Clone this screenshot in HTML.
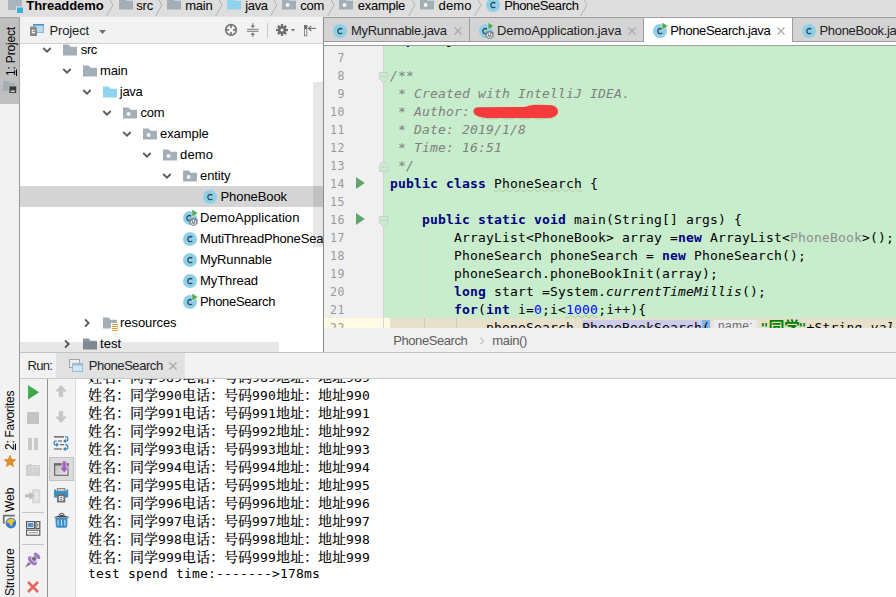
<!DOCTYPE html>
<html lang="zh">
<head>
<meta charset="utf-8">
<title>Threaddemo - PhoneSearch.java</title>
<style>
*{box-sizing:border-box;margin:0;padding:0}
html,body{width:896px;height:597px;overflow:hidden;background:#f2f2f2}
body{position:relative;font-family:"Liberation Sans","Noto Sans CJK SC",sans-serif;font-size:13px;color:#000}
.abs{position:absolute}
svg{position:absolute;overflow:visible}
/* nav bar */
#nav{left:0;top:0;width:896px;height:17px;background:#dedede;border-bottom:1px solid #e3e3e3;overflow:hidden}
#nav .t{position:absolute;top:-3.5px;height:17px;line-height:17px;font-size:13px;white-space:nowrap;color:#000}
/* left stripe */
#stripe{left:0;top:17px;width:20px;height:580px;background:#f2f2f2;border-right:1px solid #979797}
.vt{position:absolute;white-space:nowrap;font-size:12px;transform-origin:0 0;transform:rotate(-90deg);line-height:14px;height:14px}
/* project */
#phead{left:20px;top:18px;width:303px;height:26px;background:#f2f2f2;border-bottom:1px solid #d1d1d1}
#tree{left:20px;top:44px;width:303px;height:308px;background:#fff;overflow:hidden}
.row{position:absolute;left:0;width:304px;height:21px}
.row .t{position:absolute;top:0;line-height:21px;font-size:13px;white-space:nowrap}
/* editor */
#tabs{left:323px;top:17px;width:573px;height:29px;background:#fff;overflow:hidden;border-left:1px solid #8c8c8c;border-bottom:1px solid #9c9c9c}
.tab{position:absolute;top:0;height:25px;background:#d4d4d4;box-shadow:inset 0 0 0 1px #9c9c9c}
.tab .t{position:absolute;top:1px;line-height:25px;font-size:13px;white-space:nowrap;color:#222}
#ed{left:323px;top:46px;width:573px;height:282px;border-left:1px solid #8c8c8c;background:#c7edcc;overflow:hidden}
#gut{left:0;top:0;width:60px;height:284px;background:#f0f0f0;border-right:1px solid #d4d4d4}
.ln{position:absolute;left:0;width:21.200px;text-align:right;font:11.500px/18px "DejaVu Sans Mono","Liberation Mono",monospace;letter-spacing:.7px;color:#999;height:18px;margin-top:.2px}
.cl{position:absolute;left:66px;white-space:pre;font:13px/18px "DejaVu Sans Mono","Liberation Mono",monospace;letter-spacing:.174px;height:18px;color:#000}
.k{color:#000080;font-weight:bold}
.c{color:#808080;font-style:italic}
.n{color:#0000ff}
.g{color:#8c8c8c}
.i{font-style:italic}
.s{color:#008000;font-weight:bold}
.w{text-decoration:underline wavy rgba(150,150,120,.4);text-decoration-thickness:.5px;text-underline-offset:.3px;text-decoration-skip-ink:none}
#crumb{left:323px;top:328px;width:573px;height:24px;background:#f0f0f0;border-left:1px solid #8c8c8c}
#crumb .t{position:absolute;top:0;line-height:25px;font-size:13px;color:#5c5c5c;white-space:nowrap}
/* run */
#rhead{left:20px;top:352px;width:876px;height:27px;background:#f2f2f2;border-bottom:1px solid #c9c9c9;border-top:1px solid #c4c4c4}
#rhead .t{position:absolute;top:0;line-height:25px;font-size:13px;white-space:nowrap;color:#222}
#rtb{left:20px;top:379px;width:56px;height:218px;background:#f2f2f2}
#con{left:75px;top:379px;width:821px;height:218px;background:#fff;overflow:hidden;border-left:1px solid #dcdcdc}
.ol{position:absolute;left:12px;white-space:pre;font:13px/18px "DejaVu Sans Mono","Liberation Mono",monospace;letter-spacing:.174px;height:18px;color:#000}
.z{position:relative;top:-.5px;font:500 14px/18px "Noto Serif CJK SC","Noto Sans CJK SC",serif;letter-spacing:0}
</style>
</head>
<body>
<svg width="0" height="0" style="left:-10px;top:-10px">
<defs>
<symbol id="fold" viewBox="0 0 16 16"><path d="M1 2.5h5.6l2 2.2H15V13.5H1z" fill="#a3afb7"/></symbol>
<symbol id="foldb" viewBox="0 0 16 16"><path d="M1 2.5h5.6l2 2.2H15V13.5H1z" fill="#8fd3ec"/></symbol>
<symbol id="foldd" viewBox="0 0 16 16"><path d="M1 2.5h5.6l2 2.2H15V13.5H1z" fill="#8b979f"/></symbol>
<symbol id="pkg" viewBox="0 0 16 16"><path d="M1 2.5h5.6l2 2.2H15V13.5H1z" fill="#a3afb7"/><circle cx="6.6" cy="9" r="2" fill="#f4f6f7"/></symbol>
<symbol id="res" viewBox="0 0 16 16"><path d="M1 2.5h5.6l2 2.2H15V13.5H1z" fill="#a3afb7"/><rect x="9" y="8" width="7" height="8" fill="#fff"/><path d="M10 9.5h6M10 11.5h6M10 13.5h6M10 15.5h6" stroke="#e0a030" stroke-width="1"/></symbol>
<symbol id="cls" viewBox="0 0 16 16"><circle cx="8" cy="8" r="7" fill="#8fd0e8"/><path d="M10.3 9.9a2.6 2.6 0 1 1 0-3.6" fill="none" stroke="#2b4a5a" stroke-width="1.3"/></symbol>
<symbol id="clsr" viewBox="0 0 16 16"><circle cx="8" cy="8" r="7" fill="#8fd0e8"/><path d="M10.3 9.9a2.6 2.6 0 1 1 0-3.6" fill="none" stroke="#2b4a5a" stroke-width="1.3"/><path d="M10 -.8v7.800l6-3.900z" fill="#4fab4f" stroke="#fff" stroke-width=".5"/></symbol>
<symbol id="clss" viewBox="0 0 16 16"><circle cx="8" cy="8" r="7" fill="#8fd0e8"/><path d="M9.3 9.9a2.6 2.6 0 1 1 0-3.6" fill="none" stroke="#2b4a5a" stroke-width="1.3"/><path d="M10 -.8v7.800l6-3.900z" fill="#4fab4f" stroke="#fff" stroke-width=".5"/><path d="M11.500 7.400l4.100 1.700v4.600l-4.100 2.800-4.100-2.800V9.100z" fill="#7e8a92"/><path d="M10.100 10.600a2.200 2.200 0 1 0 2.800 0M11.500 9.400v2.800" fill="none" stroke="#fff" stroke-width=".9"/></symbol>
<symbol id="dn" viewBox="0 0 16 16"><path d="M4.300 6l3.700 3.700 3.700-3.700" fill="none" stroke="#5a5a5a" stroke-width="1.800"/></symbol>
<symbol id="rt" viewBox="0 0 16 16"><path d="M6 4.300l3.700 3.700-3.700 3.700" fill="none" stroke="#5a5a5a" stroke-width="1.800"/></symbol>
<symbol id="cx" viewBox="0 0 16 16"><path d="M4.5 4.5l7 7M11.5 4.5l-7 7" stroke="#a8a8a8" stroke-width="1.2"/></symbol>
<symbol id="run" viewBox="0 0 16 16"><path d="M3 1.5v13l11-6.5z" fill="#59a869"/></symbol>
</defs></svg>
<div id="nav" class="abs">
<svg width="16" height="16" style="left:7px;top:-3.500px" viewBox="0 0 16 16"><path d="M1 0h8v1.500h6V9.500H9v3.500H1z" fill="#a9b4bc"/><rect x="9" y="9.500" width="7.500" height="7" fill="#dedede"/><rect x="10" y="10.500" width="6" height="5.500" fill="#35b0dc"/></svg>
<span class="t" style="left:26.300px;font-weight:bold;letter-spacing:-0.08px">Threaddemo</span>
<svg class="chev" width="10" height="24" style="left:105px;top:-7px" viewBox="0 0 10 24"><path d="M1 0l7 12-7 12" fill="none" stroke="#b2b2b2" stroke-width="1"/></svg>
<svg width="16" height="16" style="left:118px;top:-4px"><use href="#fold"/></svg>
<span class="t" style="left:136.2px;letter-spacing:-0.13px">src</span>
<svg class="chev" width="10" height="24" style="left:154px;top:-7px" viewBox="0 0 10 24"><path d="M1 0l7 12-7 12" fill="none" stroke="#b2b2b2" stroke-width="1"/></svg>
<svg width="16" height="16" style="left:166px;top:-4px"><use href="#fold"/></svg>
<span class="t" style="left:185.2px;letter-spacing:-0.22px">main</span>
<svg class="chev" width="10" height="24" style="left:214px;top:-7px" viewBox="0 0 10 24"><path d="M1 0l7 12-7 12" fill="none" stroke="#b2b2b2" stroke-width="1"/></svg>
<svg width="16" height="16" style="left:226px;top:-4px"><use href="#foldb"/></svg>
<span class="t" style="left:245.2px;letter-spacing:-0.34px">java</span>
<svg class="chev" width="10" height="24" style="left:269px;top:-7px" viewBox="0 0 10 24"><path d="M1 0l7 12-7 12" fill="none" stroke="#b2b2b2" stroke-width="1"/></svg>
<svg width="16" height="16" style="left:281px;top:-4px"><use href="#pkg"/></svg>
<span class="t" style="left:300.2px;letter-spacing:-0.27px">com</span>
<svg class="chev" width="10" height="24" style="left:326px;top:-7px" viewBox="0 0 10 24"><path d="M1 0l7 12-7 12" fill="none" stroke="#b2b2b2" stroke-width="1"/></svg>
<svg width="16" height="16" style="left:338px;top:-4px"><use href="#pkg"/></svg>
<span class="t" style="left:357.8px;letter-spacing:-0.27px">example</span>
<svg class="chev" width="10" height="24" style="left:407px;top:-7px" viewBox="0 0 10 24"><path d="M1 0l7 12-7 12" fill="none" stroke="#b2b2b2" stroke-width="1"/></svg>
<svg width="16" height="16" style="left:419px;top:-4px"><use href="#pkg"/></svg>
<span class="t" style="left:438.5px;letter-spacing:0.18px">demo</span>
<svg class="chev" width="10" height="24" style="left:473px;top:-7px" viewBox="0 0 10 24"><path d="M1 0l7 12-7 12" fill="none" stroke="#b2b2b2" stroke-width="1"/></svg>
<svg width="16" height="16" style="left:485px;top:-3px"><use href="#cls"/></svg>
<span class="t" style="left:504.2px;letter-spacing:-0.41px">PhoneSearch</span>
<svg class="chev" width="10" height="24" style="left:579px;top:-7px" viewBox="0 0 10 24"><path d="M1 0l7 12-7 12" fill="none" stroke="#b2b2b2" stroke-width="1"/></svg>
</div>
<div id="stripe" class="abs">
<div class="abs" style="left:0;top:0;width:20px;height:87px;background:#bfbfbf;border-top:1px solid #a2a2a2;border-right:1px solid #a2a2a2"></div>
<span class="vt" style="left:3.500px;top:59px;letter-spacing:-.17px"><u>1</u>: Project</span>
<svg width="14" height="14" style="left:3px;top:63px" viewBox="0 0 14 14"><path d="M0 1h5l1.500 2H12v8H0z" fill="#a3afb7"/><rect x="5.700" y="5.700" width="8" height="7.500" fill="#bcbcbc"/><rect x="6.400" y="6.400" width="6.800" height="6.500" fill="#3a3a3a"/><rect x="7.800" y="10.500" width="4" height="1.300" fill="#f0f0f0"/></svg>
<span class="vt" style="left:3px;top:432.500px;letter-spacing:-.29px"><u>2</u>: Favorites</span>
<svg width="14" height="14" style="left:2.500px;top:436.500px" viewBox="0 0 14 14"><path d="M7 .5l2 4.500 4.700.400-3.600 3.100 1.100 4.700L7 10.700 2.800 13.200l1.100-4.700L.3 5.400 5 5z" fill="#dd8f2f"/></svg>
<span class="vt" style="left:3px;top:495px">Web</span>
<svg width="16" height="16" style="left:2px;top:497px" viewBox="0 0 16 16"><path d="M.9 .8h12v1.700H2.600v7.200H.9z" fill="#707070"/><circle cx="8.900" cy="9.100" r="5.300" fill="#2f80d2"/><path d="M5 7.200c.8-1.800 2.600-2.700 4.200-2.500 1.500.2 2.800.9 3.300 2.100.3.900-.4 1.200-1.100 1.300-.8.100-1 .8-.8 1.600.2.900-.3 1.900-1.200 2.200-.9.300-1.500-.5-1.600-1.400-.1-.8-.6-1.200-1.400-1.400C5.500 8.900 4.700 8.200 5 7.200z" fill="#f3c331"/></svg>
<span class="vt" style="left:3px;top:578.500px;letter-spacing:-.13px">Structure</span>
</div>
<div id="phead" class="abs">
<svg width="16" height="16" style="left:9px;top:4px" viewBox="0 0 16 16"><rect x="4.500" y="2.500" width="10" height="8" fill="#b9dcf2" stroke="#7db9e0" stroke-width="1"/><rect x="4" y="2" width="11" height="1.600" fill="#4d93c4"/><path d="M1 4.500h5.500L8 6v8H1z" fill="#8a8a8a"/><path d="M3.300 8.300h2.600M3.300 10.600h2.600" stroke="#f4f4f4" stroke-width="1.100"/><path d="M3.300 7.800v3.300" stroke="#f4f4f4" stroke-width=".9"/></svg>
<span class="abs" style="left:29.500px;top:0;line-height:26px;font-size:13px;color:#1a1a1a;letter-spacing:-.14px">Project</span>
<svg width="7" height="4" style="left:79px;top:11.500px" viewBox="0 0 7 4"><path d="M0 0h7L3.500 4z" fill="#6e6e6e"/></svg>
<svg width="14" height="14" style="left:204px;top:5px" viewBox="0 0 14 14"><circle cx="7" cy="6.900" r="5.300" fill="none" stroke="#787878" stroke-width="1.700"/><path d="M7 1.600v3.300M7 12.200V8.900M1.700 6.900H5M12.300 6.900H9" stroke="#787878" stroke-width="1.700"/></svg>
<svg width="12" height="14" style="left:226.500px;top:5px" viewBox="0 0 12 14"><path d="M0 6.300h11.500M0 8.300h11.500" stroke="#787878" stroke-width="1"/><path d="M5.750 0v4M5.750 14v-4" stroke="#787878" stroke-width="1"/><path d="M3.500 2.500h4.500L5.750 5.300zM3.500 11.900h4.500L5.750 9.300z" fill="#787878"/></svg>
<div class="abs" style="left:247px;top:5px;width:1px;height:15px;background:#c8c8c8"></div>
<svg width="12" height="12" style="left:256px;top:5.900px" viewBox="0 0 12 12"><g fill="#6e6e6e"><circle cx="6" cy="6" r="4"/><rect x="4.900" y="0" width="2.200" height="12"/><rect x="0" y="4.900" width="12" height="2.200"/><rect x="4.900" y=".2" width="2.200" height="11.600" transform="rotate(45 6 6)"/><rect x="4.900" y=".2" width="2.200" height="11.600" transform="rotate(-45 6 6)"/></g><circle cx="6" cy="6" r="1.600" fill="#f2f2f2"/></svg>
<svg width="4" height="2.500" style="left:270.600px;top:11px" viewBox="0 0 4 2.500"><path d="M0 0h4L2 2.500z" fill="#6e6e6e"/></svg>
<svg width="13" height="12" style="left:284px;top:7px" viewBox="0 0 13 12"><rect x=".4" y=".4" width="2.400" height="10.400" fill="#f8f8f8" stroke="#6e6e6e" stroke-width=".8"/><rect x="0" y="0" width="3.200" height="4" fill="#6e6e6e"/><path d="M4.500 3.400H12" stroke="#6e6e6e" stroke-width="1.100"/><path d="M7.300 .8L4.600 3.400l2.700 2.600" fill="none" stroke="#6e6e6e" stroke-width="1.100"/></svg>
</div>
<div id="tree" class="abs">
<div class="row" style="top:-5px"><svg width="16" height="16" style="left:19px;top:3px"><use href="#dn"/></svg><svg width="16" height="16" style="left:42px;top:2.500px"><use href="#fold"/></svg><span class="t" style="left:60.8px;letter-spacing:-0.38px">src</span></div>
<div class="row" style="top:16px"><svg width="16" height="16" style="left:39px;top:3px"><use href="#dn"/></svg><svg width="16" height="16" style="left:62px;top:2.500px"><use href="#fold"/></svg><span class="t" style="left:80px;letter-spacing:-0.17px">main</span></div>
<div class="row" style="top:37px"><svg width="16" height="16" style="left:59px;top:3px"><use href="#dn"/></svg><svg width="16" height="16" style="left:82px;top:2.500px"><use href="#foldb"/></svg><span class="t" style="left:99.8px;letter-spacing:-0.29px">java</span></div>
<div class="row" style="top:58px"><svg width="16" height="16" style="left:79px;top:3px"><use href="#dn"/></svg><svg width="16" height="16" style="left:102px;top:2.500px"><use href="#pkg"/></svg><span class="t" style="left:120.5px;letter-spacing:-0.19px">com</span></div>
<div class="row" style="top:79px"><svg width="16" height="16" style="left:99px;top:3px"><use href="#dn"/></svg><svg width="16" height="16" style="left:122px;top:2.500px"><use href="#pkg"/></svg><span class="t" style="left:140px;letter-spacing:-0.06px">example</span></div>
<div class="row" style="top:100px"><svg width="16" height="16" style="left:119px;top:3px"><use href="#dn"/></svg><svg width="16" height="16" style="left:142px;top:2.500px"><use href="#pkg"/></svg><span class="t" style="left:160px;letter-spacing:0.18px">demo</span></div>
<div class="row" style="top:121px"><svg width="16" height="16" style="left:139px;top:3px"><use href="#dn"/></svg><svg width="16" height="16" style="left:162px;top:2.500px"><use href="#pkg"/></svg><span class="t" style="left:180px;letter-spacing:-0.1px">entity</span></div>
<div class="row" style="top:142px;background:#d5d5d5"><svg width="16" height="16" style="left:182px;top:3px"><use href="#cls"/></svg><span class="t" style="left:200.5px;letter-spacing:-0.08px">PhoneBook</span></div>
<div class="row" style="top:163px"><svg width="16" height="16" style="left:162px;top:3px"><use href="#clss"/></svg><span class="t" style="left:180px;letter-spacing:0.08px">DemoApplication</span></div>
<div class="row" style="top:184px"><svg width="16" height="16" style="left:162px;top:3px"><use href="#cls"/></svg><span class="t" style="left:180px;letter-spacing:-0.18px">MutiThreadPhoneSearch</span></div>
<div class="row" style="top:205px"><svg width="16" height="16" style="left:162px;top:3px"><use href="#cls"/></svg><span class="t" style="left:180px;letter-spacing:-0.12px">MyRunnable</span></div>
<div class="row" style="top:226px"><svg width="16" height="16" style="left:162px;top:3px"><use href="#cls"/></svg><span class="t" style="left:180px;letter-spacing:-0.07px">MyThread</span></div>
<div class="row" style="top:247px"><svg width="16" height="16" style="left:162px;top:3px"><use href="#clsr"/></svg><span class="t" style="left:180px;letter-spacing:-0.34px">PhoneSearch</span></div>
<div class="row" style="top:268px"><svg width="16" height="16" style="left:59px;top:3px"><use href="#rt"/></svg><svg width="16" height="16" style="left:82px;top:2.500px"><use href="#res"/></svg><span class="t" style="left:100px;letter-spacing:-0.06px">resources</span></div>
<div class="row" style="top:289px"><svg width="16" height="16" style="left:39px;top:3px"><use href="#rt"/></svg><svg width="16" height="16" style="left:62px;top:2.500px"><use href="#foldd"/></svg><span class="t" style="left:80px;letter-spacing:0.07px">test</span></div>
<div class="abs" style="left:293px;top:38px;width:10px;height:165px;background:rgba(0,0,0,.095)"></div>
<div class="abs" style="left:0;top:297.700px;width:258.500px;height:11px;background:rgba(0,0,0,.095)"></div>
</div>
<div id="tabs" class="abs">
<div class="tab" style="left:-1px;width:147px"><svg width="16" height="16" style="left:9px;top:6px"><use href="#cls"/></svg><span class="t" style="left:28px;letter-spacing:-0.32px">MyRunnable.java</span><svg width="16" height="16" style="left:126.5px;top:5.500px"><use href="#cx"/></svg></div>
<div class="tab" style="left:145px;width:175px"><svg width="16" height="16" style="left:8.5px;top:6px"><use href="#clss"/></svg><span class="t" style="left:28px;letter-spacing:-0.07px">DemoApplication.java</span><svg width="16" height="16" style="left:154.75px;top:5.500px"><use href="#cx"/></svg></div>
<div class="tab" style="left:320px;width:148px;background:#fff;height:28px;box-shadow:inset 0 1px 0 #9c9c9c"><svg width="16" height="16" style="left:7.5px;top:6px"><use href="#clsr"/></svg><span class="t" style="left:26.3px;color:#000;letter-spacing:-0.39px">PhoneSearch.java</span><svg width="16" height="16" style="left:129px;top:5.500px"><use href="#cx"/></svg></div>
<div class="tab" style="left:468px;width:113px"><svg width="16" height="16" style="left:9px;top:6px"><use href="#cls"/></svg><span class="t" style="left:27.5px;letter-spacing:-0.33px">PhoneBook.java</span></div>
</div>
<div id="ed" class="abs"><div class="abs" style="left:0;top:-2px;width:572px;height:284px">
<div class="abs" style="left:0;top:274px;width:572px;height:18px;background:#fffae3"></div>
<div class="abs" style="left:66px;top:274px;width:506px;height:18px;background:#e7e0ca"></div>
<div id="gut" class="abs"></div>
<div class="abs" style="left:0;top:274px;width:59px;height:18px;background:#fffae3"></div>
<div class="abs" style="left:100px;top:184px;width:1px;height:90px;background:#d9e6da"></div><div class="abs" style="left:100px;top:274px;width:1px;height:18px;background:#cfcab8"></div>
<div class="abs" style="left:132px;top:274px;width:1px;height:18px;background:#cfcab8"></div>
<span class="ln" style="top:-13px">6</span>
<span class="ln" style="top:5px">7</span>
<span class="ln" style="top:23px">8</span>
<span class="ln" style="top:41px">9</span>
<span class="ln" style="top:59px">10</span>
<span class="ln" style="top:77px">11</span>
<span class="ln" style="top:95px">12</span>
<span class="ln" style="top:113px">13</span>
<span class="ln" style="top:131px">14</span>
<span class="ln" style="top:149px">15</span>
<span class="ln" style="top:167px">16</span>
<span class="ln" style="top:185px">17</span>
<span class="ln" style="top:203px">18</span>
<span class="ln" style="top:221px">19</span>
<span class="ln" style="top:239px">20</span>
<span class="ln" style="top:257px">21</span>
<span class="ln" style="top:275px">22</span>
<span class="cl" style="top:-13px"><span class="k">import</span> java.util.Iterator;</span>
<span class="cl" style="top:23px"><span class="c">/**</span></span>
<span class="cl" style="top:41px"><span class="c"> * Created with IntelliJ IDEA.</span></span>
<span class="cl" style="top:59px"><span class="c"> * Author: </span></span>
<span class="cl" style="top:77px"><span class="c"> * Date: 2019/1/8</span></span>
<span class="cl" style="top:95px"><span class="c"> * Time: 16:51</span></span>
<span class="cl" style="top:113px"><span class="c"> */</span></span>
<span class="cl" style="top:131px"><span class="k">public class</span> <span class="w">PhoneSearch</span> {</span>
<span class="cl" style="top:167px">    <span class="k">public static void</span> main(String[] args) {</span>
<span class="cl" style="top:185px">        ArrayList&lt;PhoneBook&gt; array =<span class="k">new</span> ArrayList&lt;<span class="g">PhoneBook</span>&gt;();</span>
<span class="cl" style="top:203px">        PhoneSearch phoneSearch = <span class="k">new</span> PhoneSearch();</span>
<span class="cl" style="top:221px">        phoneSearch.phoneBookInit(array);</span>
<span class="cl" style="top:239px">        <span class="k">long</span> start =System.<span class="i">currentTimeMillis</span>();</span>
<span class="cl" style="top:257px">        <span class="k">for</span>(<span class="k">int</span> i=<span class="n">0</span>;i&lt;<span class="n w">1000</span>;i++){</span>
<span class="cl" style="top:275px">            phoneSearch.<span style="background:#cdcdea">PhoneBookSearch</span><span style="background:#7db3ee">(</span></span>
<span class="abs" style="left:389.400px;top:275.500px;width:44px;height:15px;border-radius:3px;background:#ececec;color:#6e6e6e;font:12px/12.500px 'Liberation Sans',sans-serif;letter-spacing:.3px;text-align:center">name:</span>
<span class="cl s" style="top:275px;left:436.500px">"</span>
<span class="abs s" style="left:444.500px;top:273px;font:bold 16px/18px 'Noto Sans CJK SC',sans-serif;letter-spacing:-.5px;height:18px;white-space:nowrap">同学</span>
<span class="cl" style="top:275px;left:474.500px"><span class="s">"</span>+String.<span class="i">val</span></span>
<svg width="86" height="16" style="left:149px;top:59.500px" viewBox="0 0 86 16"><path d="M8 14.500q4-1.500 8 0t8 0 8 0 8 0 8 0 8 0 8 0 8 0 8 0" fill="none" stroke="#a9b9ab" stroke-width=".8"/><path d="M.5 7.800C.5 4.800 2 3.400 6 3.300L48 3C54 3 56 .9 62 .7L76 .9C82 1 85 4 85 7.500C85 11.500 81 14 75 14.100L18 14.100C10 14 .5 12.500 .5 7.800z" fill="#f53b3b"/></svg>
<svg width="9" height="12" style="left:32.300px;top:132.700px" viewBox="0 0 9 12"><path d="M0 0v12l8.800-6z" fill="#5ea66b"/></svg>
<svg width="9" height="12" style="left:32.300px;top:168.700px" viewBox="0 0 9 12"><path d="M0 0v12l8.800-6z" fill="#5ea66b"/></svg>
<svg width="9" height="12" style="left:55px;top:28px" viewBox="0 0 9 12"><path d="M.5.500h8v6.200l-4 4.300-4-4.300z" fill="#c7edcc" stroke="#cdcdcd"/><path d="M2.500 4.500h4" stroke="#cdcdcd"/></svg>
<svg width="9" height="12" style="left:55px;top:115.5px" viewBox="0 0 9 12"><path d="M.5 11.500h8v-6.200l-4-4.300-4 4.300z" fill="#c7edcc" stroke="#cdcdcd"/><path d="M2.500 7.500h4" stroke="#cdcdcd"/></svg>
<svg width="9" height="12" style="left:55px;top:172px" viewBox="0 0 9 12"><path d="M.5.500h8v6.200l-4 4.300-4-4.300z" fill="#c7edcc" stroke="#cdcdcd"/><path d="M2.500 4.500h4" stroke="#cdcdcd"/></svg>
</div></div>
<div id="crumb" class="abs"><span class="t" style="left:69.3px;letter-spacing:-0.44px">PhoneSearch</span><svg width="8" height="10" style="left:154px;top:8px" viewBox="0 0 8 10"><path d="M2 1.500l3.500 3.500L2 8.500" fill="none" stroke="#a6a6a6" stroke-width="1"/></svg><span class="t" style="left:168.3px;letter-spacing:-0.36px">main()</span></div>
<div id="rhead" class="abs">
<span class="t" style="left:7.5px;letter-spacing:-0.74px">Run:</span>
<div class="abs" style="left:36px;top:0;width:128.700px;height:25px;background:#e1e1e1"></div>
<svg width="16" height="16" style="left:48px;top:5px" viewBox="0 0 16 16"><rect x="1.500" y="1.500" width="10" height="8" fill="#ececec" stroke="#a4a4a4"/><rect x="4.500" y="5.500" width="10" height="8" fill="#cfe6f7" stroke="#98bad6"/><rect x="4.500" y="5.500" width="10" height="2" fill="#9dbbd6"/></svg>
<span class="t" style="left:68.7px;letter-spacing:-0.43px">PhoneSearch</span>
<svg width="16" height="16" style="left:145px;top:5px"><use href="#cx"/></svg>
</div>
<div id="rtb" class="abs">
<div class="abs" style="left:27px;top:0;width:1px;height:218px;background:#919191"></div>
<svg width="11" height="14.4" style="left:8px;top:6px" viewBox="0 0 11 14.4"><defs><linearGradient id="gp" x1="0" y1="0" x2="1" y2="1"><stop offset="0" stop-color="#46b955"/><stop offset="1" stop-color="#2f9a3f"/></linearGradient></defs><path d="M0 0v14.400L11 7.200z" fill="url(#gp)"/></svg>
<div class="abs" style="left:7px;top:33px;width:12px;height:12px;background:#c4c4c4"></div>
<div class="abs" style="left:8px;top:59px;width:4px;height:12px;background:#c8c8c8"></div><div class="abs" style="left:14px;top:59px;width:4px;height:12px;background:#c8c8c8"></div>
<svg width="14" height="13" style="left:6px;top:84px" viewBox="0 0 14 13"><path d="M0 2h2.500V.800h3V2H14v11H0z" fill="#cfcfcf"/><circle cx="7" cy="7.500" r="4.200" fill="#dedede"/><circle cx="7" cy="7.500" r="3.100" fill="#cbcbcb"/><circle cx="7" cy="7.500" r="1.700" fill="#dcdcdc"/><rect x="11.300" y="3.300" width="1.300" height="1.300" fill="#eee"/></svg>
<svg width="15.5" height="14.5" style="left:5px;top:109.5px" viewBox="0 0 15.5 14.5"><path d="M7 .3h8.200v14H7z" fill="#d6d6d6"/><path d="M9.500 2.300h4v10h-4z" fill="#e6e6e6"/><path d="M0 5.300h4.500V2.500L9.300 6.800 4.500 11.100V8.300H0z" fill="#bcbcbc"/></svg>
<div class="abs" style="left:2px;top:133px;width:22px;height:1px;background:#c6c6c6"></div>
<svg width="14.5" height="15" style="left:6px;top:141.5px" viewBox="0 0 14.5 15"><rect x=".6" y=".6" width="8" height="6.800" fill="#fff" stroke="#5a5a5a" stroke-width="1.200"/><rect x="1.800" y="2" width="5.600" height="4" fill="#4f95dc"/><rect x="10" y=".6" width="3.800" height="6.800" fill="#fff" stroke="#5a5a5a" stroke-width="1.200"/><rect x="11.400" y="2.500" width="1" height="3" fill="#5a5a5a"/><rect x=".6" y="9.200" width="13.200" height="5" fill="#fff" stroke="#5a5a5a" stroke-width="1.200"/><rect x="2.500" y="11.200" width="9.500" height="1" fill="#8a8a8a"/></svg>
<div class="abs" style="left:2px;top:165px;width:22px;height:1px;background:#c6c6c6"></div>
<svg width="16" height="15" style="left:5px;top:174px" viewBox="0 0 16 15"><path d="M0 14.600L3.500 9.300l2.300 2z" fill="#6e6e6e"/><ellipse cx="7.400" cy="7.800" rx="5.600" ry="3.100" transform="rotate(45 7.400 7.800)" fill="#a375c6"/><ellipse cx="8.600" cy="6.500" rx="3.600" ry="2" transform="rotate(45 8.600 6.500)" fill="#d9c4e8"/><rect x="7.200" y="4" width="3.700" height="3.700" transform="rotate(45 9.050 5.850)" fill="#6f6f6f"/><ellipse cx="12.100" cy="2.900" rx="4" ry="2" transform="rotate(45 12.100 2.900)" fill="#a375c6"/></svg>
<svg width="12" height="12" style="left:7px;top:201.5px" viewBox="0 0 12 12"><path d="M1 1l10 10M11 1L1 11" stroke="#e2685b" stroke-width="2.500"/></svg>
<svg width="12" height="12" style="left:35px;top:6px" viewBox="0 0 12 12"><path d="M6 0l6 6.500H8.200V12H3.800V6.500H0z" fill="#c6c6c6"/></svg>
<svg width="12" height="12" style="left:35px;top:32px" viewBox="0 0 12 12"><path d="M6 12l6-6.500H8.200V0H3.800v5.500H0z" fill="#c6c6c6"/></svg>
<svg width="14.500" height="15.500" style="left:34px;top:56.500px" viewBox="0 0 14.500 15.500"><path d="M0 .9h9.900M4 5h3.900M6 8.800h3.900M0 13h7.900" stroke="#4a4a4a" stroke-width="1.100"/><g fill="none" stroke="#2f80b8" stroke-width="1.200"><path d="M11.100 .9h1.600a1 1 0 0 1 1 1V4a1 1 0 0 1-1 1h-2"/><path d="M2.800 5H1.200a1 1 0 0 0-1 1v1.800a1 1 0 0 0 1 1h2"/><path d="M11.100 8.800h1.600a1 1 0 0 1 1 1V12a1 1 0 0 1-1 1h-2"/></g><path d="M9.100 5l2.700-2.300v4.600zM5 8.800L2.300 6.500v4.600zM9 13l2.700-2.300v4.600z" fill="#2f80b8"/></svg>
<div class="abs" style="left:29px;top:78px;width:25px;height:24px;background:#dbdbdb;border:1px solid #c2c2c2"></div>
<svg width="16" height="15" style="left:34px;top:82px" viewBox="0 0 16 15"><defs><linearGradient id="gs" x1="0" y1="0" x2="1" y2="1"><stop offset="0" stop-color="#bdbdbd"/><stop offset="1" stop-color="#e6e6e6"/></linearGradient></defs><rect x=".6" y="2.900" width="13.400" height="11.400" fill="url(#gs)" stroke="#6b6b6b" stroke-width="1.200"/><rect x="0" y="2.300" width="14.600" height="2.200" fill="#6b6b6b"/><path d="M8.200 0h4v6.300h2.800l-4.800 5.600-4.800-5.600h2.800z" fill="#a15bc4" stroke="#dbdbdb" stroke-width=".8"/></svg>
<svg width="15" height="15" style="left:34px;top:108.500px" viewBox="0 0 15 15"><rect x="3.300" y=".7" width="7.600" height="2.600" fill="#e4e4e4" stroke="#767676" stroke-width="1"/><path d="M0 2.300a.7.700 0 0 1 .7-.7H2v1.400h10.200V1.600h1.300a.7.700 0 0 1 .7.700v7.300H0z" fill="#3b8ec7"/><rect x="3.900" y="7.200" width="6.400" height="6.400" fill="#efefef" stroke="#707070" stroke-width="1.800"/><path d="M6.200 9.500h1.800M6.200 11.400h1.800" stroke="#555" stroke-width=".9"/></svg>
<svg width="15.500" height="15.500" style="left:33.500px;top:134px" viewBox="0 0 15.500 15.500"><path d="M5.300 2.300a2.400 1.900 0 0 1 4.800 0" fill="none" stroke="#444" stroke-width="1"/><path d="M.2 4L7.750 1.700 15.300 4v.5H.2z" fill="#484848"/><path d="M1.400 4.800h12.200l-.4 8.500a1.500 1.500 0 0 1-1.500 1.400H3.300a1.500 1.500 0 0 1-1.500-1.400z" fill="#3b8ec7"/><path d="M4.100 6.800v5.800M7.500 6.800v5.800M10.900 6.800v5.800" stroke="#eaf3fa" stroke-width=".9"/></svg>
</div>
<div id="con" class="abs">
<span class="ol" style="top:-12px"><span class="z">姓名：同学</span>989<span class="z">电话：号码</span>989<span class="z">地址：地址</span>989</span>
<span class="ol" style="top:6px"><span class="z">姓名：同学</span>990<span class="z">电话：号码</span>990<span class="z">地址：地址</span>990</span>
<span class="ol" style="top:24px"><span class="z">姓名：同学</span>991<span class="z">电话：号码</span>991<span class="z">地址：地址</span>991</span>
<span class="ol" style="top:42px"><span class="z">姓名：同学</span>992<span class="z">电话：号码</span>992<span class="z">地址：地址</span>992</span>
<span class="ol" style="top:60px"><span class="z">姓名：同学</span>993<span class="z">电话：号码</span>993<span class="z">地址：地址</span>993</span>
<span class="ol" style="top:78px"><span class="z">姓名：同学</span>994<span class="z">电话：号码</span>994<span class="z">地址：地址</span>994</span>
<span class="ol" style="top:96px"><span class="z">姓名：同学</span>995<span class="z">电话：号码</span>995<span class="z">地址：地址</span>995</span>
<span class="ol" style="top:114px"><span class="z">姓名：同学</span>996<span class="z">电话：号码</span>996<span class="z">地址：地址</span>996</span>
<span class="ol" style="top:132px"><span class="z">姓名：同学</span>997<span class="z">电话：号码</span>997<span class="z">地址：地址</span>997</span>
<span class="ol" style="top:150px"><span class="z">姓名：同学</span>998<span class="z">电话：号码</span>998<span class="z">地址：地址</span>998</span>
<span class="ol" style="top:168px"><span class="z">姓名：同学</span>999<span class="z">电话：号码</span>999<span class="z">地址：地址</span>999</span>
<span class="ol" style="top:186px">test spend time:-------&gt;178ms</span>
</div>
</body>
</html>
